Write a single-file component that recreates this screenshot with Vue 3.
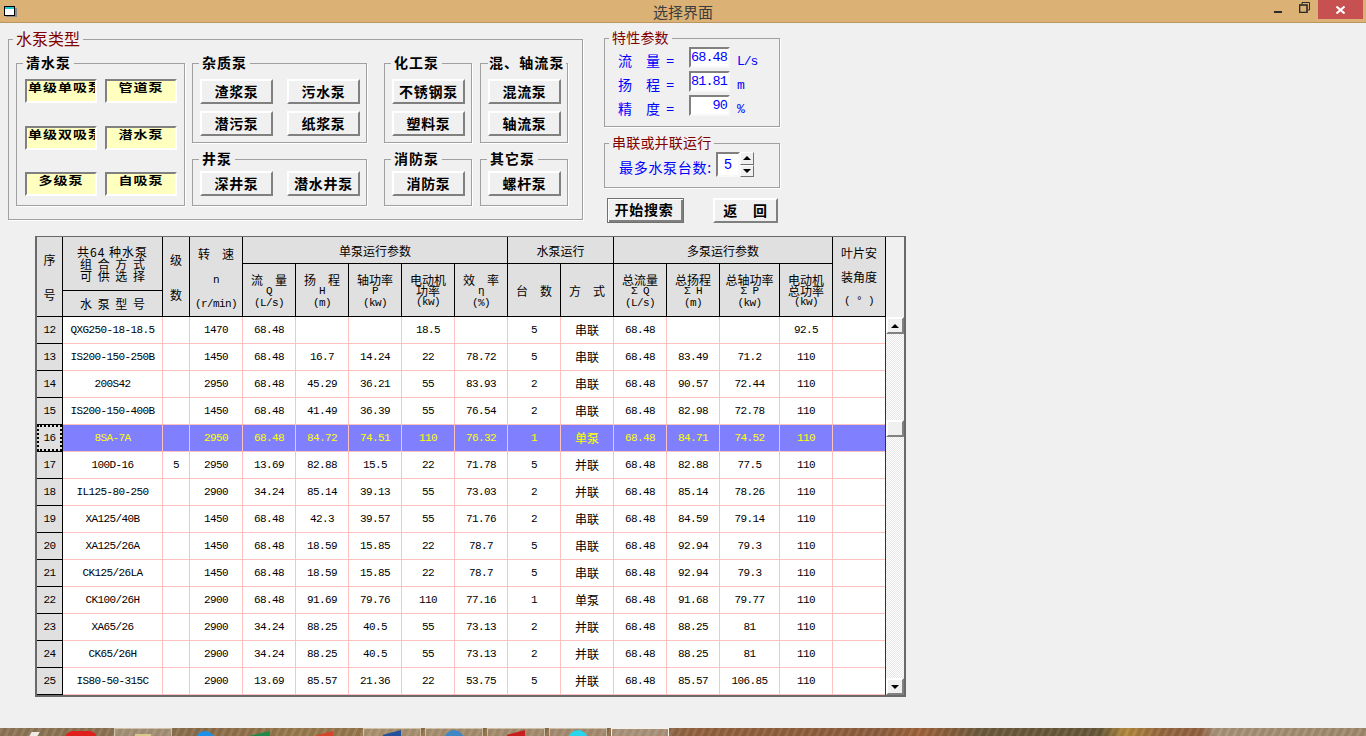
<script setup>
const yellowButtons = ['单级单吸泵', '管道泵', '单级双吸泵', '潜水泵', '多级泵', '自吸泵']
const heads = [
  { cls: 'tall', wrap: 'far', lines: ['序', '号'] },
  { cls: 'tall model' },
  { cls: 'tall', wrap: 'far', lines: ['级', '数'] },
  { cls: 'tall', wrap: 'wide shift', lines: ['转　速', 'n', '(r/min)'] },
  { cls: 'c5', lines: ['单泵运行参数'] },
  { cls: 'c2', lines: ['水泵运行'] },
  { cls: 'c4', lines: ['多泵运行参数'] },
  { cls: 'tall', wrap: 'wide', lines: ['叶片安', '装角度', '( ° )'] },
  { cls: 'sub', lines: ['流　量', 'Q', '(L/s)'] },
  { cls: 'sub', lines: ['扬　程', 'H', '(m)'] },
  { cls: 'sub', lines: ['轴功率', 'P', '(kw)'] },
  { cls: 'sub', lines: ['电动机', '功率', '(kw)'] },
  { cls: 'sub', lines: ['效　率', 'η', '(%)'] },
  { lines: ['台　数'] },
  { lines: ['方　式'] },
  { cls: 'sub', lines: ['总流量', 'Σ Q', '(L/s)'] },
  { cls: 'sub', lines: ['总扬程', 'Σ H', '(m)'] },
  { cls: 'sub', lines: ['总轴功率', 'Σ P', '(kw)'] },
  { cls: 'sub', lines: ['电动机', '总功率', '(kw)'] }
]
const isCjk = (s) => /[\u4e00-\u9fff]/.test(s)
const rows = [
  [12, 'QXG250-18-18.5', '', '1470', '68.48', '', '', '18.5', '', '5', '串联', '68.48', '', '', '92.5'],
  [13, 'IS200-150-250B', '', '1450', '68.48', '16.7', '14.24', '22', '78.72', '5', '串联', '68.48', '83.49', '71.2', '110'],
  [14, '200S42', '', '2950', '68.48', '45.29', '36.21', '55', '83.93', '2', '串联', '68.48', '90.57', '72.44', '110'],
  [15, 'IS200-150-400B', '', '1450', '68.48', '41.49', '36.39', '55', '76.54', '2', '串联', '68.48', '82.98', '72.78', '110'],
  [16, '8SA-7A', '', '2950', '68.48', '84.72', '74.51', '110', '76.32', '1', '单泵', '68.48', '84.71', '74.52', '110'],
  [17, '100D-16', '5', '2950', '13.69', '82.88', '15.5', '22', '71.78', '5', '并联', '68.48', '82.88', '77.5', '110'],
  [18, 'IL125-80-250', '', '2900', '34.24', '85.14', '39.13', '55', '73.03', '2', '并联', '68.48', '85.14', '78.26', '110'],
  [19, 'XA125/40B', '', '1450', '68.48', '42.3', '39.57', '55', '71.76', '2', '串联', '68.48', '84.59', '79.14', '110'],
  [20, 'XA125/26A', '', '1450', '68.48', '18.59', '15.85', '22', '78.7', '5', '串联', '68.48', '92.94', '79.3', '110'],
  [21, 'CK125/26LA', '', '1450', '68.48', '18.59', '15.85', '22', '78.7', '5', '串联', '68.48', '92.94', '79.3', '110'],
  [22, 'CK100/26H', '', '2900', '68.48', '91.69', '79.76', '110', '77.16', '1', '单泵', '68.48', '91.68', '79.77', '110'],
  [23, 'XA65/26', '', '2900', '34.24', '88.25', '40.5', '55', '73.13', '2', '并联', '68.48', '88.25', '81', '110'],
  [24, 'CK65/26H', '', '2900', '34.24', '88.25', '40.5', '55', '73.13', '2', '并联', '68.48', '88.25', '81', '110'],
  [25, 'IS80-50-315C', '', '2900', '13.69', '85.57', '21.36', '22', '53.75', '5', '并联', '68.48', '85.57', '106.85', '110']
]
</script>

<template>
  <div class="app">
    <header class="titlebar">
      <svg class="appicon" width="14" height="11" viewBox="0 0 14 11">
        <rect x="2" y="2" width="11" height="9" fill="#8a8a8a" />
        <rect x="0.5" y="0.5" width="10" height="9" fill="#fff" stroke="#000" />
        <rect x="1" y="1" width="9" height="2" fill="#27c8d8" />
      </svg>
      <span class="title">选择界面</span>
      <span class="winbtn min"><i></i></span>
      <span class="winbtn max">
        <svg width="11" height="11" viewBox="0 0 11 11" fill="none" stroke="#2b2b2b">
          <path d="M3 2.5V0.5H10.5V8H8.5" />
          <rect x="0.5" y="3" width="7.5" height="7.5" stroke-width="1.6" />
        </svg>
      </span>
      <span class="winbtn close">
        <svg width="9" height="8" viewBox="0 0 9 8" stroke="#fff" stroke-width="2"><path d="M0.5 0.5L8.5 7.5M8.5 0.5L0.5 7.5" /></svg>
      </span>
    </header>

    <main class="main">
      <section class="top">
        <div class="group outer">
          <span class="legend big">水泵类型</span>
          <div class="group clean">
            <span class="legend bold">清水泵</span>
            <button v-for="b in yellowButtons" :key="b" class="yellow" :class="{ long: b.length > 3 }"><span>{{ b }}</span></button>
          </div>
          <div class="stack wide-stack">
            <div class="group two">
              <span class="legend bold">杂质泵</span>
              <button class="btn">渣浆泵</button><button class="btn">污水泵</button>
              <button class="btn">潜污泵</button><button class="btn">纸浆泵</button>
            </div>
            <div class="group two short">
              <span class="legend bold">井泵</span>
              <button class="btn">深井泵</button><button class="btn">潜水井泵</button>
            </div>
          </div>
          <div class="stack narrow first">
            <div class="group one">
              <span class="legend bold">化工泵</span>
              <button class="btn">不锈钢泵</button><button class="btn">塑料泵</button>
            </div>
            <div class="group one short">
              <span class="legend bold">消防泵</span>
              <button class="btn">消防泵</button>
            </div>
          </div>
          <div class="stack narrow">
            <div class="group one">
              <span class="legend bold tightlegend">混、轴流泵</span>
              <button class="btn">混流泵</button><button class="btn">轴流泵</button>
            </div>
            <div class="group one short">
              <span class="legend bold">其它泵</span>
              <button class="btn">螺杆泵</button>
            </div>
          </div>
        </div>

        <div class="side">
          <div class="group params">
            <span class="legend mid">特性参数</span>
            <span class="plabel">流　量 =</span><span class="pinput">68.48</span><span class="unit">L/s</span>
            <span class="plabel">扬　程 =</span><span class="pinput">81.81</span><span class="unit">m</span>
            <span class="plabel">精　度 =</span><span class="pinput">90</span><span class="unit">%</span>
          </div>
          <div class="group series">
            <span class="legend mid">串联或并联运行</span>
            <span class="slabel">最多水泵台数:</span>
            <span class="spinval">5</span>
            <span class="spin">
              <button class="spinbtn"><i class="tri up"></i></button>
              <button class="spinbtn"><i class="tri down"></i></button>
            </span>
          </div>
          <div class="actions">
            <button class="btn action default">开始搜索</button>
            <button class="btn action back">返　回</button>
          </div>
        </div>
      </section>

      <section class="table">
        <div class="thead">
          <div class="hgrid">
            <div v-for="(h, i) in heads" :key="i" class="hcell" :class="[h.cls, h.wrap]">
              <template v-if="h.lines">
                <span v-for="l in h.lines" :key="l" :class="isCjk(l) ? 'cn' : 'lat'">{{ l }}</span>
              </template>
              <template v-else>
                <div class="mtop">
                  <span class="cn sp">共64 种水泵</span>
                  <span class="cn sp">组合方式</span>
                  <span class="cn sp">可供选择</span>
                </div>
                <div class="mbot"><span class="cn sp">水泵型号</span></div>
              </template>
            </div>
          </div>
          <div class="corner"></div>
        </div>
        <div class="tbody">
          <div class="rows">
            <div v-for="r in rows" :key="r[0]" class="row" :class="{ sel: r[0] === 16 }">
              <div class="rowhead">{{ r[0] }}</div>
              <div v-for="(v, i) in r.slice(1)" :key="i" class="cell" :class="{ cjk: i === 9 }">{{ v }}</div>
              <div class="cell"></div>
            </div>
          </div>
          <div class="vscroll">
            <button class="sbtn"><i class="tri up"></i></button>
            <button class="sbtn thumb"></button>
            <button class="sbtn"><i class="tri down"></i></button>
          </div>
        </div>
      </section>
    </main>

    <footer class="taskbar">
      <i class="tb-white"></i>
      <i class="tb-red"></i>
      <span class="tb-box first"><i class="tb-folder"></i></span>
      <i class="tb-blue"></i>
      <i class="tb-green"></i>
      <i class="tb-orange"></i>
      <span class="tb-box win"><i class="tb-wedge navy"></i></span>
      <span class="tb-box"><i class="tb-dot steel"></i></span>
      <span class="tb-box"><i class="tb-wedge crimson"></i></span>
      <span class="tb-box"><i class="tb-dot cyan"></i></span>
      <span class="tb-box active"></span>
      <span class="clock">12:57</span>
    </footer>
  </div>
</template>

<style>
html, body { margin: 0; background: #f0f0f0; overflow: hidden; }
</style>

<style scoped>
.app {
  width: 1366px;
  height: 736px;
  display: flex;
  flex-direction: column;
  overflow: hidden;
  background: #f0f0f0;
  font-family: "Liberation Mono", "Noto Sans CJK SC", monospace;
  color: #000;
}
button { font-family: inherit; padding: 0; margin: 0; box-sizing: border-box; color: #000; }
i { display: block; }

.titlebar {
  height: 23px;
  flex: none;
  box-sizing: border-box;
  position: relative;
  background: #dbb175;
  border-bottom: 1px solid #b9975f;
  display: flex;
  align-items: flex-start;
  justify-content: flex-end;
}
.appicon { position: absolute; left: 4px; top: 6px; }
.title {
  position: absolute;
  left: 653px;
  top: 1px;
  font: 15px/22px "Noto Sans CJK SC", sans-serif;
  color: #3c3c3c;
}
.winbtn { display: flex; align-items: center; justify-content: center; height: 19px; }
.winbtn.min { width: 26px; }
.winbtn.min i { width: 8px; height: 2px; background: #2b2b2b; margin-top: 5px; }
.winbtn.max { width: 26px; margin-right: 1px; }
.winbtn.max svg { margin-top: -4px; }
.winbtn.close { width: 45px; background: #c75050; margin-right: 3px; }

.main { flex: 1; padding-top: 15px; min-height: 0; }
.top { display: flex; align-items: flex-start; margin-left: 8px; }

.group {
  position: relative;
  box-sizing: border-box;
  border: 1px solid #a0a0a0;
  box-shadow: 1px 1px 0 #fff;
}
.legend {
  position: absolute;
  background: #f0f0f0;
  padding: 0 3px;
  white-space: nowrap;
  font-family: "Noto Sans CJK SC", sans-serif;
}
.legend.big { left: 4px; top: -11px; font-size: 16px; line-height: 18px; color: #800000; }
.legend.mid { left: 4px; top: -10px; font-size: 14px; line-height: 16px; color: #800000; letter-spacing: 0.2px; }
.legend.bold { left: 6px; top: -10px; font-size: 14px; line-height: 16px; font-weight: 700; letter-spacing: 1px; padding: 0 3px; }
.legend.tightlegend { left: 7px; padding: 0 1px; letter-spacing: 1.1px; white-space: nowrap; }

.outer {
  width: 575px;
  height: 181px;
  margin-top: 1px;
  flex: none;
  padding: 23px 0 0 7px;
  display: flex;
  align-items: flex-start;
}
.clean {
  width: 169px;
  height: 143px;
  flex: none;
  padding: 15px 0 0 8px;
  display: grid;
  grid-template-columns: 72px 72px;
  grid-template-rows: 47px 46px 24px;
  column-gap: 8px;
}
.yellow {
  height: 24px;
  width: 72px;
  background: #ffffc0;
  border: 2px solid;
  border-color: #808080 #fff #fff #808080;
  overflow: hidden;
  font: 700 14px/17px "Noto Sans CJK SC", sans-serif;
  white-space: nowrap;
  display: flex;
  justify-content: center;
  align-items: flex-start;
}
.yellow.long { justify-content: flex-start; padding-left: 1px; }
.yellow span { letter-spacing: 1px; flex: none; transform: scaleY(.82); transform-origin: 50% 0; }

.stack { display: flex; flex-direction: column; gap: 16px; flex: none; }
.wide-stack { width: 175px; margin-left: 7px; }
.narrow { width: 88px; margin-left: 8px; }
.narrow.first { margin-left: 17px; }

.two, .one {
  height: 80px;
  padding: 15px 0 0 7px;
  display: grid;
  grid-auto-rows: 25px;
  row-gap: 7px;
}
.two { grid-template-columns: 73px 73px; column-gap: 14px; }
.one { grid-template-columns: 73px; }
.short { height: 47px; padding-top: 11px; }

.btn {
  height: 25px;
  background: #f0f0f0;
  border: 2px solid;
  border-color: #fff #808080 #808080 #fff;
  font: 700 14px/20px "Noto Sans CJK SC", sans-serif;
  letter-spacing: 0.7px;
  white-space: nowrap;
  overflow: hidden;
  padding-bottom: 4px;
}

.side { margin-left: 21px; width: 176px; flex: none; }
.params {
  height: 89px;
  padding: 8px 0 0 13px;
  display: grid;
  grid-template-columns: 71px 41px auto;
  grid-auto-rows: 21px;
  row-gap: 3px;
  color: #0000ff;
}
.plabel { font-size: 14px; line-height: 26px; white-space: pre; font-family: "Noto Sans CJK SC", sans-serif; word-spacing: 3px; }
.pinput {
  box-sizing: border-box;
  background: #fff;
  border: 2px solid;
  border-color: #808080 #f8f8f8 #f8f8f8 #808080;
  text-align: right;
  font-size: 13.5px;
  line-height: 18px;
  padding-right: 1px;
  letter-spacing: -0.9px;
  overflow: hidden;
}
.unit { font-size: 13px; line-height: 30px; padding-left: 7px; letter-spacing: -1px; }
.series {
  margin-top: 16px;
  height: 45px;
  padding: 8px 0 0 14px;
  display: flex;
  align-items: flex-start;
  color: #0000ff;
}
.slabel { font: 14px/30px "Noto Sans CJK SC", sans-serif; letter-spacing: 0.7px; width: 97px; flex: none; white-space: nowrap; }
.spinval {
  width: 24px;
  height: 25px;
  box-sizing: border-box;
  background: #fff;
  border: 2px solid;
  border-color: #808080 #f8f8f8 #f8f8f8 #808080;
  font-size: 14px;
  line-height: 22px;
  text-align: center;
  flex: none;
}
.spin { display: flex; flex-direction: column; width: 14px; gap: 0; }
.spinbtn {
  width: 14px;
  height: 12.5px;
  background: #f0f0f0;
  border: 1px solid;
  border-color: #fff #707070 #707070 #fff;
  display: flex;
  align-items: center;
  justify-content: center;
}
.tri { width: 0; height: 0; border-left: 4px solid transparent; border-right: 4px solid transparent; }
.tri.up { border-bottom: 4px solid #000; }
.tri.down { border-top: 4px solid #000; }

.actions { display: flex; margin: 10px 0 0 3px; gap: 29px; }
.action { height: 25px; font-size: 14px; letter-spacing: 0.8px; }
.default { width: 77px; border: 1px solid #000; box-shadow: inset 1px 1px 0 #fff, inset -2px -2px 0 #808080; outline: 1px solid #707070; outline-offset: -1px; padding-right: 3px; }
.back { width: 65px; }

.table {
  margin: 13px 0 0 35px;
  width: 871px;
  height: 461px;
  box-sizing: border-box;
  border: 2px solid #696969;
  border-top-width: 1px;
}
.thead { display: flex; height: 80px; }
.hgrid {
  width: 848px;
  flex: none;
  box-sizing: border-box;
  height: 80px;
  padding-bottom: 1px;
  background: #000;
  display: grid;
  grid-template-columns: 25px 99px 26px 52px repeat(9, 52px) 59px 52px 52px;
  grid-template-rows: 26px 52px;
  gap: 1px;
}
.hcell {
  background: #e0e0e0;
  display: flex;
  flex-direction: column;
  align-items: center;
  justify-content: center;
  line-height: 11px;
  min-width: 0;
}
.tall { grid-row: span 2; }
.c5 { grid-column: span 5; }
.c2 { grid-column: span 2; }
.c4 { grid-column: span 4; }
.sub { padding-top: 2px; box-sizing: border-box; }
.cn { display: block; font: 12px/11px "Noto Sans CJK SC", sans-serif; white-space: pre; }
.lat { display: block; font-size: 11px; letter-spacing: -0.6px; line-height: 12px; white-space: pre; }
.far .cn { line-height: 35px; }
.wide .cn, .wide .lat { line-height: 24px; }
.shift { padding-top: 2px; box-sizing: border-box; }
.shift .lat { transform: translateY(2px); }
.model { background: #000; justify-content: flex-start; align-items: stretch; gap: 1px; }
.mtop { height: 53px; background: #e0e0e0; display: flex; flex-direction: column; justify-content: center; align-items: center; }
.mbot { flex: 1; background: #e0e0e0; display: flex; justify-content: center; align-items: center; }
.sp { letter-spacing: 5.6px; margin-right: -5.6px; line-height: 12px; }
.mtop .sp:first-child { letter-spacing: 1px; margin-right: 0; }
.mbot .sp { line-height: 16px; }
.corner { flex: none; width: 19px; box-sizing: border-box; border-left: 1px solid #000; background: #f0f0f0; }

.tbody { display: flex; height: 378px; }
.rows { width: 848px; flex: none; }
.row {
  height: 27px;
  box-sizing: border-box;
  padding-bottom: 1px;
  background: #ffc0c0;
  display: grid;
  grid-template-columns: 25px 99px 26px 52px repeat(9, 52px) 59px 52px 52px;
  column-gap: 1px;
}
.rowhead {
  background: #e0e0e0;
  box-shadow: 1px 0 0 #000, 0 1px 0 #000, 1px 1px 0 #000;
  text-align: center;
  font-size: 11px;
  line-height: 26px;
  letter-spacing: -0.6px;
  box-sizing: border-box;
}
.cell {
  background: #fff;
  text-align: center;
  font-size: 11px;
  line-height: 26px;
  letter-spacing: -0.6px;
  white-space: nowrap;
  overflow: hidden;
}
.cell.cjk { font: 12px/26px "Noto Sans CJK SC", sans-serif; letter-spacing: 0; }
.sel .cell { background: #8080ff; color: #ffff00; }
.sel .rowhead { border: 2px dotted #000; line-height: 22px; }
.vscroll {
  flex: none;
  width: 19px;
  box-sizing: border-box;
  position: relative;
  border-left: 1px solid #333;
  background: repeating-conic-gradient(#fff 0 25%, #e6e6e6 0 50%) 0 0 / 2px 2px;
  display: flex;
  flex-direction: column;
  justify-content: space-between;
}
.sbtn {
  width: 18px;
  height: 17px;
  background: #f0f0f0;
  border: 2px solid;
  border-color: #fff #808080 #808080 #fff;
  display: flex;
  align-items: center;
  justify-content: center;
}
.thumb { position: absolute; left: 0; top: 103px; }

.taskbar {
  height: 8px;
  flex: none;
  position: relative;
  display: flex;
  align-items: flex-start;
  overflow: hidden;
  background:
    repeating-linear-gradient(115deg, rgba(255,255,255,.06) 0 3px, rgba(0,0,0,.06) 3px 7px),
    linear-gradient(90deg, #8e7657 0, #8d7352 170px, #8b6d49 200px, #9a7b4e 300px, #8e7048 480px, #8c6c4c 650px, #95623e 700px, #8c5f3f 880px, #a0633a 920px, #6d5a3c 980px, #665737 1100px, #b48a3e 1125px, #96693f 1160px, #93603f 1200px, #a9947a 1215px, #a08a6d 1366px);
}
.taskbar i, .tb-box { flex: none; }
.tb-white { width: 8px; height: 6px; background: #fff; margin: 4px 0 0 30px; transform: skewX(-30deg); opacity: .85; }
.tb-red { width: 32px; height: 12px; background: #e0201c; border-radius: 8px 8px 0 0; margin: 3px 0 0 27px; }
.tb-box {
  width: 58px;
  height: 12px;
  box-sizing: border-box;
  border: 1px solid rgba(235,225,205,.6);
  background: rgba(255,255,255,.2);
  display: flex;
  justify-content: center;
  margin-left: 4px;
}
.tb-box.first { margin-left: 17px; }
.tb-box.win { margin-left: 30px; }
.tb-box.active { border-color: #f4f1e8; background: rgba(255,255,255,.25); border-width: 1px; }
.tb-folder { width: 16px; height: 6px; background: #d8c889; margin-top: 5px; }
.tb-blue { width: 20px; height: 12px; border-radius: 10px 10px 0 0; background: #1e90e8; margin: 3px 0 0 23px; }
.tb-green { width: 20px; height: 8px; background: #1f8a4a; clip-path: polygon(0 60%, 100% 0, 100% 100%, 0 100%); margin: 3px 0 0 35px; }
.tb-orange { width: 18px; height: 8px; background: #d5452a; clip-path: polygon(0 60%, 100% 0, 100% 100%, 0 100%); margin: 3px 0 0 45px; }
.tb-wedge { width: 18px; height: 8px; clip-path: polygon(0 60%, 100% 0, 100% 100%, 0 100%); margin-top: 1px; }
.navy { background: #24519c; }
.crimson { background: #c81e1e; }
.tb-dot { width: 20px; height: 12px; border-radius: 10px 10px 0 0; margin-top: 1px; }
.steel { background: #3f86c4; }
.cyan { background: #27d6ea; }
.clock {
  position: absolute;
  left: 1307px;
  top: 6px;
  color: #fff;
  font: 12px/14px "Noto Sans", sans-serif;
  letter-spacing: 1px;
}
</style>
